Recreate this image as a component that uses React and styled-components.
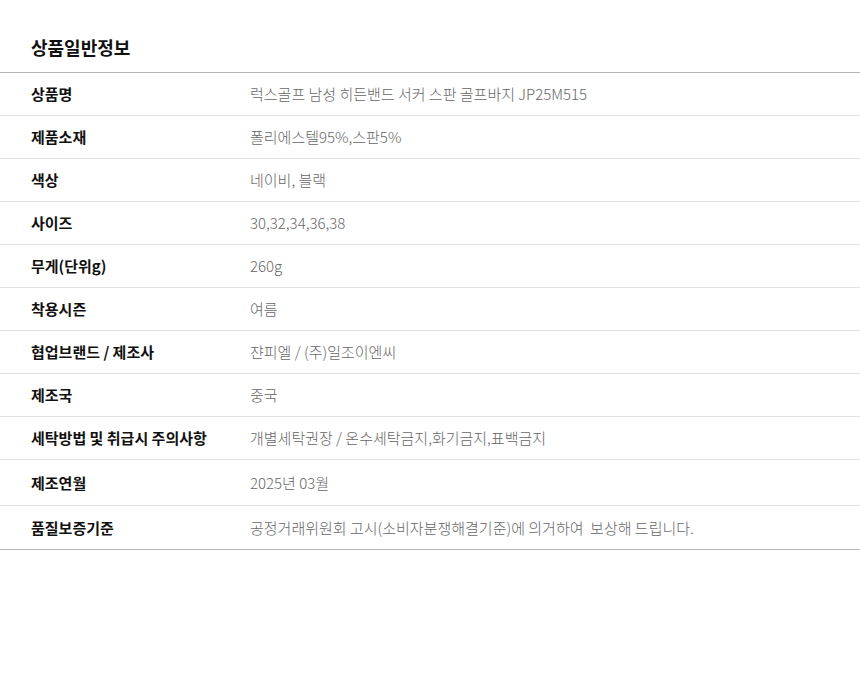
import React from 'react'
import styled, { createGlobalStyle } from 'styled-components'

const Global = createGlobalStyle`
  body {
    margin: 0;
    background: #fff;
    font-family: "Noto Sans CJK KR", "Noto Sans", sans-serif;
  }
`

const rows = [
    ['상품명', '럭스골프 남성 히든밴드 서커 스판 골프바지 JP25M515'],
    ['제품소재', '폴리에스텔95%,스판5%'],
    ['색상', '네이비, 블랙'],
    ['사이즈', '30,32,34,36,38'],
    ['무게(단위g)', '260g'],
    ['착용시즌', '여름'],
    ['협업브랜드 / 제조사', '쟌피엘 / (주)일조이엔씨'],
    ['제조국', '중국'],
    ['세탁방법 및 취급시 주의사항', '개별세탁권장 / 온수세탁금지,화기금지,표백금지'],
    ['제조연월', '2025년 03월', 46],
    ['품질보증기준', '공정거래위원회 고시(소비자분쟁해결기준)에 의거하여  보상해 드립니다.', 44],
]

function App() {
    return (
        <>
            <Global />
            <Section>
                <Title>상품일반정보</Title>
                <Table>
                    {rows.map(([label, value, h]) => (
                        <Row key={label} h={h || 43}>
                            <Label>{label}</Label>
                            <Value>{value}</Value>
                        </Row>
                    ))}
                </Table>
            </Section>
        </>
    )
}

const Section = styled.div`
    width: 860px;
    padding-top: 34px;
`

const Title = styled.h2`
    margin: 0 0 0 31px;
    height: 38px;
    font-size: 18px;
    font-weight: 700;
    color: #111;
    line-height: 26px;
`

const Table = styled.div`
    border-top: 1px solid #b4b4b4;
    border-bottom: 1px solid #b4b4b4;
`

const Row = styled.div`
    display: grid;
    grid-template-columns: 219px 1fr;
    align-items: center;
    padding-left: 31px;
    height: ${p => p.h - 1}px;
    border-top: 1px solid #e2e2e2;

    &:first-child {
        border-top: none;
    }
`

const Label = styled.div`
    font-size: 15px;
    font-weight: 700;
    color: #111;
    white-space: pre;
    margin-top: -1px;
`

const Value = styled.div`
    font-size: 15px;
    font-weight: 300;
    color: #666;
    white-space: pre;
    margin-top: -1px;
`

export default App
